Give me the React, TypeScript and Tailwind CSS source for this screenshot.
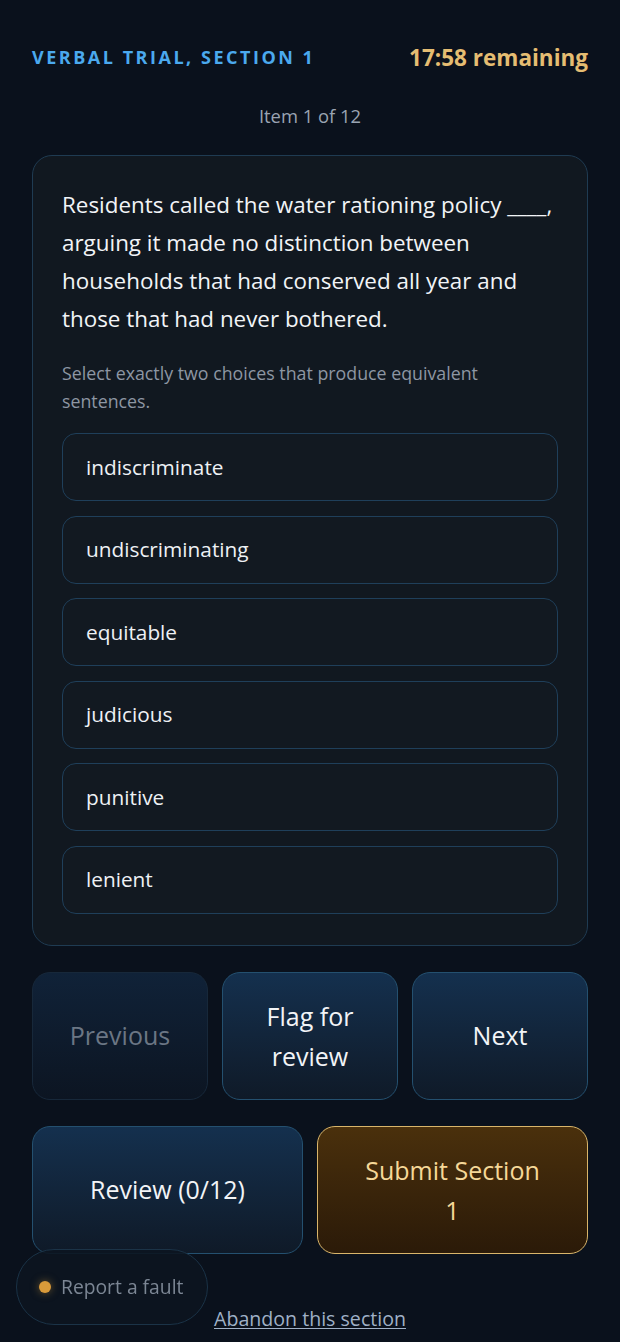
import React, { useState } from 'react';

const choices = [
  'indiscriminate',
  'undiscriminating',
  'equitable',
  'judicious',
  'punitive',
  'lenient',
];

const font = { fontFamily: '"Open Sans", "Noto Sans", sans-serif' };

export default function App() {
  const [picked, setPicked] = useState<string[]>([]);

  const toggle = (c: string) =>
    setPicked(p => (p.includes(c) ? p.filter(x => x !== c) : [...p, c]));

  return (
    <div className="min-h-[1342px] bg-[#0a111c] text-white" style={font}>
      <div className="px-8 pt-[41px] pb-[12px]">
        <header className="flex items-center justify-between">
          <span className="text-[18px] font-bold tracking-[0.14em] text-[#4ba9ee]">
            VERBAL TRIAL, SECTION 1
          </span>
          <span className="text-[22.5px] font-bold text-[#e5bd72]">17:58 remaining</span>
        </header>

        <p className="mt-[27px] text-center text-[18.4px] text-[#9aa4b2]">Item 1 of 12</p>

        <section className="mt-[26px] rounded-[20px] border border-[#1f3b52] bg-[#111820] px-[29px] pt-[30px] pb-[31px]">
          <p className="text-[22.4px] leading-[38px] text-[#f2f4f7]">
            Residents called the water rationing policy ____, arguing it made no distinction
            between households that had conserved all year and those that had never bothered.
          </p>
          <p className="mt-[21px] text-[17.8px] leading-[28px] text-[#8d96a3]">
            Select exactly two choices that produce equivalent sentences.
          </p>

          <div className="mt-[18px] flex flex-col gap-[14.5px]">
            {choices.map(c => (
              <button
                key={c}
                onClick={() => toggle(c)}
                className={`h-[68px] rounded-[14px] border px-[23px] text-left text-[20.8px] text-[#eef1f5] ${
                  picked.includes(c)
                    ? 'border-[#4ba9ee] bg-[#132a40]'
                    : 'border-[#1f3f5a] bg-[#121921]'
                }`}
              >
                {c}
              </button>
            ))}
          </div>
        </section>

        <div className="mt-[26px] grid grid-cols-3 gap-[14px]">
          <button
            disabled
            className="h-[128px] rounded-[18px] border border-[#17283a] bg-gradient-to-b from-[#102238] to-[#0c1522] text-[25px] text-[#6b7684]"
          >
            Previous
          </button>
          <button className="h-[128px] rounded-[18px] border border-[#24506f] bg-gradient-to-b from-[#14304e] to-[#0f1a28] px-4 text-[25px] leading-[40px] text-[#f2f4f7]">
            Flag for review
          </button>
          <button className="h-[128px] rounded-[18px] border border-[#24506f] bg-gradient-to-b from-[#14304e] to-[#0f1a28] text-[25px] text-[#f2f4f7]">
            Next
          </button>
        </div>

        <div className="mt-[26px] grid grid-cols-2 gap-[14px]">
          <button className="h-[128px] rounded-[18px] border border-[#24506f] bg-gradient-to-b from-[#14304e] to-[#0f1a28] text-[25px] text-[#f2f4f7]">
            Review (0/12)
          </button>
          <button className="h-[128px] rounded-[18px] border border-[#d9b56a] bg-gradient-to-b from-[#4a300c] to-[#2b1a08] text-[25px] leading-[40px] text-[#f6d898]">
            <span className="inline-block max-w-[190px]">Submit Section 1</span>
          </button>
        </div>

        <div className="mt-[50px] text-center">
          <a href="#" className="text-[19.6px] text-[#9fb0c6] underline underline-offset-2">
            Abandon this section
          </a>
        </div>
      </div>

      <button className="fixed bottom-[17px] left-[16px] flex h-[76px] w-[192px] items-center gap-[10px] rounded-full border border-[#1b3347] bg-[#0c1520]/90 pl-[22px] text-[19.3px] text-[#7c8694]">
        <span className="h-[12px] w-[12px] shrink-0 rounded-full bg-[#d99a3a] shadow-[0_0_8px_#d99a3a80]" />
        Report a fault
      </button>
    </div>
  );
}
